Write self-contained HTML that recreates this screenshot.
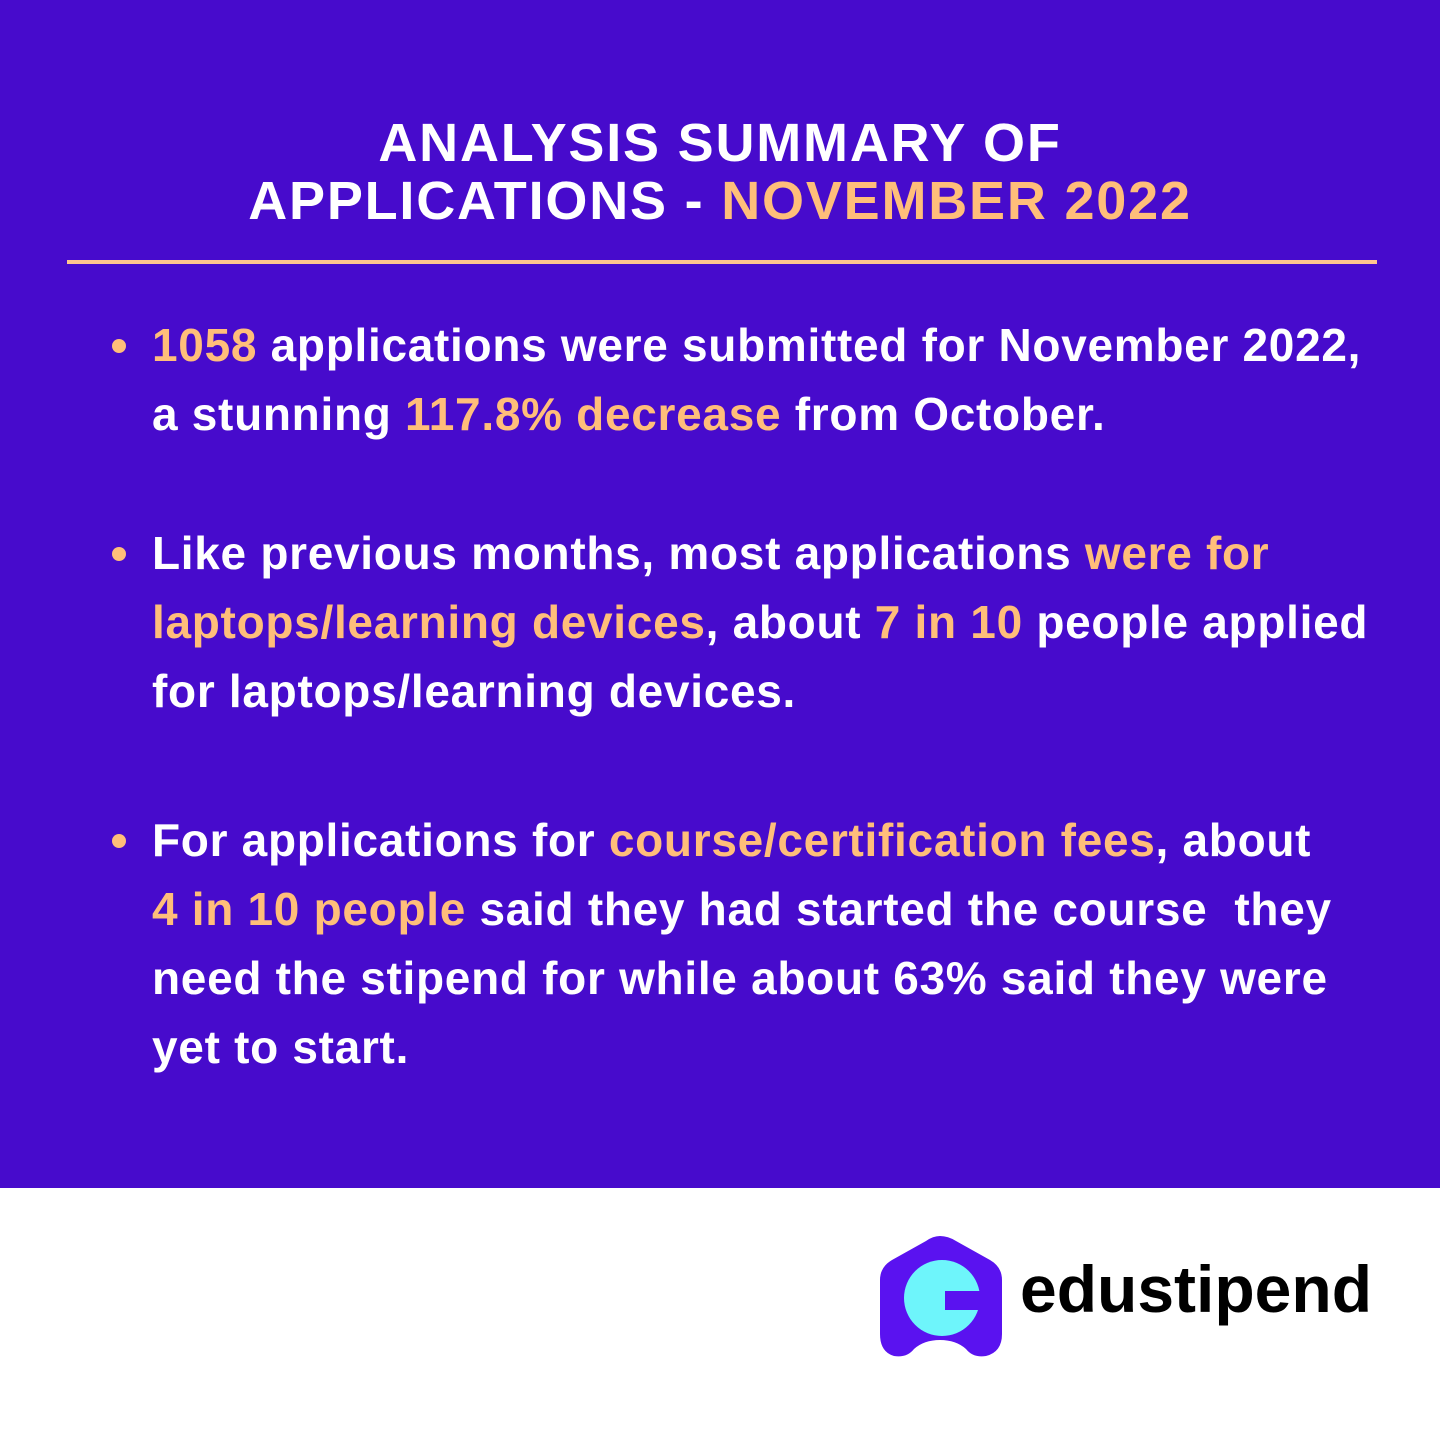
<!DOCTYPE html>
<html><head><meta charset="utf-8"><style>
body{margin:0;width:1440px;height:1440px;background:#fff;position:relative;overflow:hidden;font-family:"Liberation Sans",sans-serif}
.top{position:absolute;left:0;top:0;width:1440px;height:1188px;background:#470bcc}
.t{position:absolute;left:0;width:1440px;text-align:center;color:#fff;font-weight:bold;font-size:54px;letter-spacing:1.8px;white-space:nowrap}
.o{color:#ffbe7a}
.rule{position:absolute;left:67px;top:260px;width:1310px;height:4px;background:#ffc58f}
.l{position:absolute;left:152px;color:#fff;font-weight:bold;font-size:46px;letter-spacing:0.7px;white-space:nowrap;line-height:1}
.d{position:absolute;left:112px;width:14px;height:14px;border-radius:50%;background:#ffbe7a}
</style></head><body>
<div class="top"></div>
<div class="t" style="top:112px">ANALYSIS SUMMARY OF</div>
<div class="t" style="top:170px">APPLICATIONS - <span class="o">NOVEMBER 2022</span></div>
<div class="rule"></div>

<div class="d" style="top:339px"></div>
<div class="l" style="top:322px"><span class="o">1058</span> applications were submitted for November 2022,</div>
<div class="l" style="top:391px">a stunning <span class="o">117.8% decrease</span> from October.</div>

<div class="d" style="top:547px"></div>
<div class="l" style="top:530px">Like previous months, most applications <span class="o">were for</span></div>
<div class="l" style="top:599px"><span class="o">laptops/learning devices</span>, about <span class="o">7 in 10</span> people applied</div>
<div class="l" style="top:668px">for laptops/learning devices.</div>

<div class="d" style="top:834px"></div>
<div class="l" style="top:817px">For applications for <span class="o">course/certification fees</span>, about</div>
<div class="l" style="top:886px"><span class="o">4 in 10 people</span> said they had started the course &nbsp;they</div>
<div class="l" style="top:955px">need the stipend for while about 63% said they were</div>
<div class="l" style="top:1024px">yet to start.</div>

<svg style="position:absolute;left:878px;top:1234px" width="126" height="126" viewBox="0 0 126 126">
<path d="M62 2 Q70 2 78 7 L112 26 Q124 33 124 46 L124 100 Q124 118 108 122 Q95 124 88 115 Q78 106 62 106 Q46 106 36 115 Q29 124 16 122 Q2 118 2 100 L2 46 Q2 33 14 26 L48 7 Q55 2 62 2Z" fill="#5a12f0"/>
<circle cx="64" cy="64" r="38" fill="#6ef5fb"/>
<rect x="67" y="57" width="40" height="19" fill="#5a12f0"/>
</svg>
<div style="position:absolute;left:1020px;top:1256px;font-size:66px;font-weight:bold;color:#000;letter-spacing:0px;line-height:1">edustipend</div>
</body></html>
